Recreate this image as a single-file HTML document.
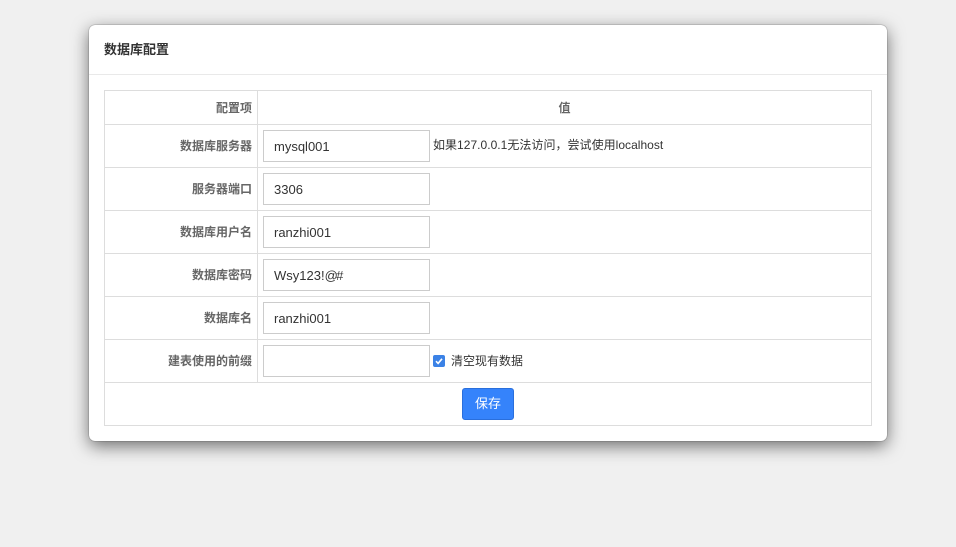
<!DOCTYPE html>
<html lang="zh-CN">
<head>
<meta charset="utf-8">
<title>数据库配置</title>
<style>
html,body{margin:0;padding:0;}
body{width:956px;height:547px;background:#f0f0f0;overflow:hidden;position:relative;font-family:"Liberation Sans","Noto Sans CJK SC",sans-serif;font-size:12px;color:#333;}
.modal{position:absolute;left:89px;top:25px;width:798px;height:416px;background:#fff;border-radius:6px;box-shadow:0 0 1px 0 rgba(0,0,0,.7),0 5px 17px rgba(0,0,0,.55);}
.abs{position:absolute;white-space:nowrap;}
.h{background:#ddd;height:1px;position:absolute;left:104px;width:768px;}
.v{background:#ddd;width:1px;position:absolute;}
.lab{position:absolute;left:105px;width:147px;text-align:right;font-weight:bold;color:#666;line-height:18px;white-space:nowrap;}
.inp{position:absolute;left:263px;width:165px;height:30px;border:1px solid #ccc;background:#fff;font-size:13px;line-height:32px;text-indent:10px;color:#333;}
.btn{position:absolute;left:462px;top:388px;width:50px;height:30px;border:1px solid #2a6fdc;border-radius:3px;background:#3583fb;color:#fff;font-size:13px;line-height:30px;text-align:center;}
.chk{position:absolute;left:433px;top:355px;width:12px;height:12px;border-radius:2px;background:#3b82e6;}
</style>
</head>
<body>
<div class="modal"></div>
<div class="abs" style="left:89px;top:74px;width:798px;height:1px;background:#e9e9e9;"></div>
<div class="abs" style="left:104px;top:41px;font-size:13px;font-weight:bold;line-height:18px;color:#333;">数据库配置</div>

<div class="h" style="top:90px"></div>
<div class="h" style="top:124px"></div>
<div class="h" style="top:167px"></div>
<div class="h" style="top:210px"></div>
<div class="h" style="top:253px"></div>
<div class="h" style="top:296px"></div>
<div class="h" style="top:339px"></div>
<div class="h" style="top:382px"></div>
<div class="h" style="top:425px"></div>
<div class="v" style="left:104px;top:90px;height:336px"></div>
<div class="v" style="left:871px;top:90px;height:336px"></div>
<div class="v" style="left:257px;top:90px;height:292px"></div>

<div class="lab" style="top:99px">配置项</div>
<div class="abs" style="left:258px;width:613px;top:99px;text-align:center;font-weight:bold;color:#666;line-height:18px;">值</div>

<div class="lab" style="top:137px">数据库服务器</div>
<div class="inp" style="top:130px">mysql001</div>
<div class="abs" style="left:433px;top:136px;line-height:18px;color:#333;letter-spacing:.03px;">如果127.0.0.1无法访问，尝试使用localhost</div>

<div class="lab" style="top:180px">服务器端口</div>
<div class="inp" style="top:173px">3306</div>

<div class="lab" style="top:223px">数据库用户名</div>
<div class="inp" style="top:216px">ranzhi001</div>

<div class="lab" style="top:266px">数据库密码</div>
<div class="inp" style="top:259px">Wsy123!<span style="letter-spacing:-1.7px">@#</span></div>

<div class="lab" style="top:309px">数据库名</div>
<div class="inp" style="top:302px">ranzhi001</div>

<div class="lab" style="top:352px">建表使用的前缀</div>
<div class="inp" style="top:345px"></div>
<div class="chk"><svg width="12" height="12" viewBox="0 0 12 12" style="display:block"><path d="M3 6.2L5.1 8.4L9 3.8" fill="none" stroke="#fff" stroke-width="1.6"/></svg></div>
<div class="abs" style="left:451px;top:352px;line-height:18px;color:#333;">清空现有数据</div>

<div class="btn">保存</div>
</body>
</html>
